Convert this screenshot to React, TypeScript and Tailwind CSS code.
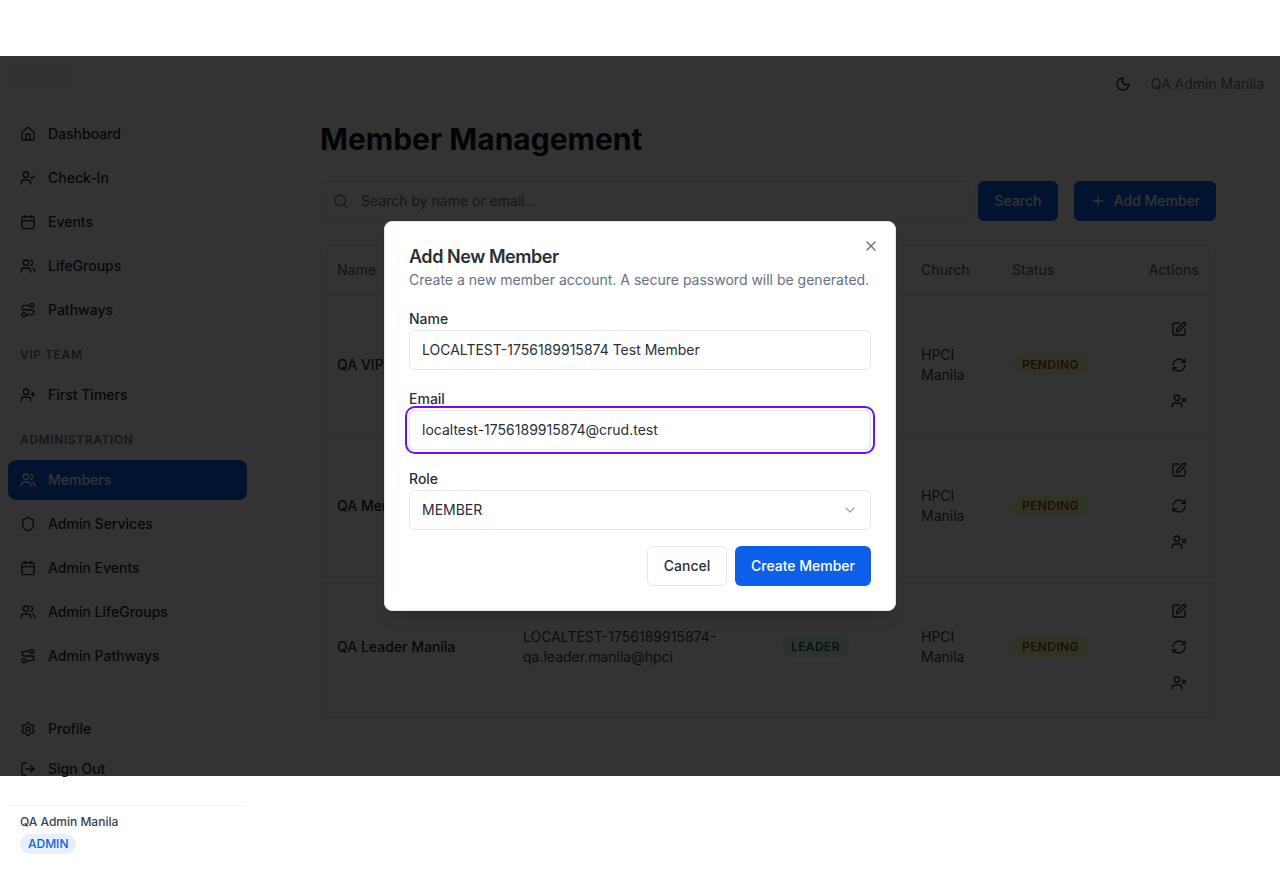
import React from "react";
import { Home, UserCheck, Calendar, Users, Route, UserPlus, Shield, Settings, LogOut, Moon, Search, Plus, SquarePen, RefreshCw, UserX, X, ChevronDown } from "lucide-react";

type Item = { icon: React.ElementType; label: string; active?: boolean };

const primary: Item[] = [
  { icon: Home, label: "Dashboard" },
  { icon: UserCheck, label: "Check-In" },
  { icon: Calendar, label: "Events" },
  { icon: Users, label: "LifeGroups" },
  { icon: Route, label: "Pathways" },
];
const admin: Item[] = [
  { icon: Users, label: "Members", active: true },
  { icon: Shield, label: "Admin Services" },
  { icon: Calendar, label: "Admin Events" },
  { icon: Users, label: "Admin LifeGroups" },
  { icon: Route, label: "Admin Pathways" },
];

function NavRow({ icon: Icon, label, active }: Item) {
  return (
    <div className={`flex h-10 items-center gap-3 rounded-lg px-3 text-sm font-medium ${active ? "bg-[#0b5fe8] text-white" : "text-[#1f2937]"}`}>
      <Icon className="h-4 w-4 shrink-0" />
      <span>{label}</span>
    </div>
  );
}

function SectionTitle({ children }: { children: React.ReactNode }) {
  return <div className="mb-3 mt-3 h-[16px] px-3 text-xs font-semibold uppercase leading-4 tracking-wider text-[#64748b]">{children}</div>;
}

const rows = [
  { name: "QA VIP Manila", email: "qa.vip.manila", role: "VIP", roleCls: "bg-[#f3e8ff] text-[#6b21a8]" },
  { name: "QA Member Manila", email: "qa.member.manila", role: "MEMBER", roleCls: "bg-[#f1f5f9] text-[#334155]" },
  { name: "QA Leader Manila", email: "qa.leader.manila", role: "LEADER", roleCls: "bg-[#dcfce7] text-[#166534]" },
];

function Field({ label, children }: { label: string; children: React.ReactNode }) {
  return (
    <div>
      <div className="mb-1 h-[14px] text-sm font-medium leading-[14px] text-[#2a2e38]">{label}</div>
      {children}
    </div>
  );
}

export default function App() {
  return (
    <div className="relative h-[879px] overflow-hidden bg-white pt-14 font-['Inter',sans-serif] text-[#2a2e38]">
      <header className="flex h-[57px] items-center justify-between border-b border-[#f1f3f6] pl-3 pr-4">
        <div className="mt-2 h-6 w-14 self-start rounded-md bg-[#f0f5fb]" />
        <div className="flex items-center gap-5">
          <Moon className="h-4 w-4 text-[#1f2937]" />
          <span className="text-sm text-[#64748b]">QA Admin Manila</span>
        </div>
      </header>

      <div className="flex">
        <aside className="h-[608px] w-64 shrink-0 border-r border-[#f1f3f6] px-2 pt-[1px]">
          <nav className="flex flex-col gap-1">
            {primary.map((i) => <NavRow key={i.label} {...i} />)}
          </nav>
          <div className="mt-1 border-b border-[#f1f3f6]" />
          <SectionTitle>VIP Team</SectionTitle>
          <NavRow icon={UserPlus} label="First Timers" />
          <div className="mt-1 border-b border-[#f1f3f6]" />
          <SectionTitle>Administration</SectionTitle>
          <nav className="flex flex-col gap-1">
            {admin.map((i) => <NavRow key={i.label} {...i} />)}
          </nav>
          <div className="mt-[33px]">
            <NavRow icon={Settings} label="Profile" />
            <NavRow icon={LogOut} label="Sign Out" />
          </div>
          <div className="mt-4 border-t border-[#f1f3f6] px-3 pt-[8px]">
            <div className="text-xs font-medium leading-4 text-[#374151]">QA Admin Manila</div>
            <span className="mt-[4px] inline-block rounded-full bg-[#e6effc] px-2 text-xs font-medium leading-5 text-[#0b62ea]">ADMIN</span>
          </div>
        </aside>

        <main className="min-w-0 flex-1 px-16 pt-2">
          <h1 className="text-3xl font-bold leading-9 text-[#111827]">Member Management</h1>
          <div className="mt-6 flex">
            <div className="flex h-10 flex-1 items-center gap-3 rounded-md border border-[#e8ebf0] bg-white pl-3 text-sm text-[#64748b]">
              <Search className="h-4 w-4 text-[#64748b]" />
              <span>Search by name or email...</span>
            </div>
            <button className="ml-2 h-10 w-20 rounded-md bg-[#0b5fe8] text-sm font-medium text-white">Search</button>
            <button className="ml-4 flex h-10 w-[142px] items-center justify-center gap-2 rounded-md bg-[#0b5fe8] text-sm font-medium text-white">
              <Plus className="h-4 w-4" />
              Add Member
            </button>
          </div>

          <div className="mt-6 overflow-hidden rounded-lg border border-[#e8ebf0]">
            <table className="w-full table-fixed border-collapse text-left text-sm">
              <colgroup>
                <col className="w-[186px]" />
                <col className="w-[258px]" />
                <col className="w-[140px]" />
                <col className="w-[91px]" />
                <col />
                <col className="w-[96px]" />
              </colgroup>
              <thead>
                <tr className="h-12 border-b border-[#e8ebf0] text-[#64748b]">
                  <th className="px-4 font-medium">Name</th>
                  <th className="px-4 font-medium">Email</th>
                  <th className="px-4 font-medium">Role</th>
                  <th className="px-4 font-medium">Church</th>
                  <th className="px-4 font-medium">Status</th>
                  <th className="px-4 text-right font-medium">Actions</th>
                </tr>
              </thead>
              <tbody>
                {rows.map((r, i) => (
                  <tr key={r.name} className={i < rows.length - 1 ? "border-b border-[#e8ebf0]" : ""}>
                    <td className="px-4 font-medium text-[#1f2937]">{r.name}</td>
                    <td className="break-words px-4 leading-5 text-[#334155]">LOCALTEST-1756189915874-<br />{r.email}@hpci</td>
                    <td className="px-4">
                      <span className={`inline-block rounded-full px-2.5 text-xs font-semibold leading-[21px] tracking-[0.4px] ${r.roleCls}`}>{r.role}</span>
                    </td>
                    <td className="px-4 leading-5 text-[#334155]">HPCI Manila</td>
                    <td className="px-4">
                      <span className="inline-block rounded-full bg-[#fef9c3] px-2.5 text-xs font-semibold leading-[21px] tracking-[0.4px] text-[#854d0e]">PENDING</span>
                    </td>
                    <td className="py-4 pl-4 pr-4">
                      <div className="flex flex-col items-end text-[#1f2937]">
                        {[SquarePen, RefreshCw, UserX].map((Icon, n) => (
                          <div key={n} className="flex h-9 w-10 items-center justify-center"><Icon className="h-4 w-4" /></div>
                        ))}
                      </div>
                    </td>
                  </tr>
                ))}
              </tbody>
            </table>
          </div>
        </main>
      </div>

      <div className="absolute inset-x-0 top-14 flex h-[720px] items-center justify-center bg-black/80">
        <div className="relative w-[512px] rounded-lg border border-[#e2e8f0] bg-white p-6 shadow-lg">
          <X className="absolute right-[16px] top-[16px] h-4 w-4 text-[#6b7280]" />
          <h2 className="mt-px text-lg font-semibold leading-5 tracking-tight text-[#2a2e38]">Add New Member</h2>
          <p className="mt-[3px] text-sm leading-5 text-[#667085]">Create a new member account. A secure password will be generated.</p>
          <div className="mt-[22px] flex flex-col gap-[22px]">
            <Field label="Name">
              <div className="flex h-10 items-center rounded-md border border-[#e2e8f0] px-3 text-sm">LOCALTEST-1756189915874 Test Member</div>
            </Field>
            <Field label="Email">
              <div className="flex h-10 items-center rounded-md border border-[#e2e8f0] px-3 text-sm ring-2 ring-[#6d0ff0] ring-offset-2">localtest-1756189915874@crud.test</div>
            </Field>
            <Field label="Role">
              <div className="flex h-10 items-center justify-between rounded-md border border-[#e2e8f0] px-3 text-sm">
                <span>MEMBER</span>
                <ChevronDown className="h-4 w-4 text-[#9ca3af]" />
              </div>
            </Field>
          </div>
          <div className="mt-4 flex justify-end gap-2">
            <button className="h-10 w-20 rounded-md border border-[#e2e8f0] bg-white text-sm font-medium text-[#2a2e38]">Cancel</button>
            <button className="h-10 w-[136px] rounded-md bg-[#0b5fe8] text-sm font-medium text-white">Create Member</button>
          </div>
        </div>
      </div>
    </div>
  );
}
